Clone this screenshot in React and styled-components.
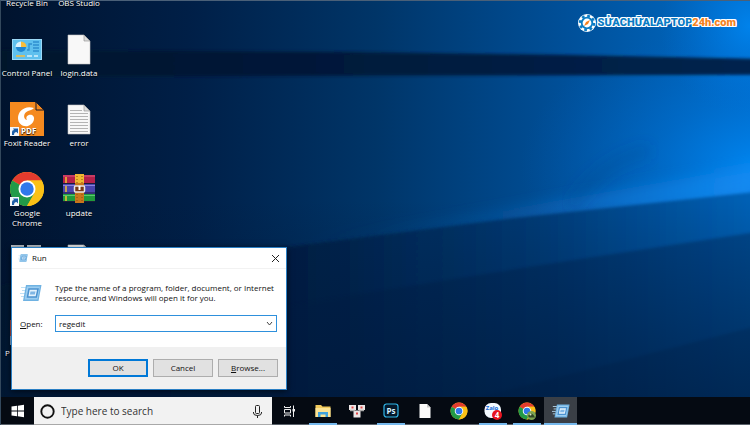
import styled, { createGlobalStyle } from "styled-components";

const GlobalStyle = createGlobalStyle`
  * {
    box-sizing: border-box;
  }
  body {
    margin: 0;
    overflow: hidden;
    font-family: "Open Sans", "Noto Sans", sans-serif;
    font-size: 8px;
    line-height: 10px;
  }
  button,
  input {
    font: inherit;
    margin: 0;
    padding: 0;
    border: none;
    background: none;
  }
`;

const Screen = styled.div`
  height: 100vh;
  display: flex;
  flex-direction: column;
  background-color: #00142f;
  border-top: 1px solid #4a6078;
  border-left: 1px solid #33485c;
`;

const Desktop = styled.main`
  flex: 1;
  min-height: 0;
  position: relative;
  overflow: hidden;
  display: flex;
  justify-content: space-between;
  align-items: flex-start;
`;

const WallpaperSvg = styled.svg`
  position: absolute;
  inset: 0;
  width: 100%;
  height: 100%;
`;

const IconGrid = styled.div`
  position: relative;
  display: grid;
  grid-template-columns: repeat(2, 52px);
  grid-auto-rows: 70px;
  margin-top: -39px;
`;

const Shortcut = styled.button`
  display: flex;
  flex-direction: column;
  align-items: center;
  gap: 2px;
  color: white;
  text-shadow: 0 1px 1px black;
  & svg {
    width: 34px;
    height: 34px;
  }
`;

const IconSpace = styled.span`
  height: 34px;
`;

const Label = styled.span`
  max-width: ${(props) => (props.$narrow ? "40px" : "none")};
  white-space: ${(props) => (props.$narrow ? "normal" : "nowrap")};
  align-self: ${(props) => (props.$start ? "flex-start" : "center")};
  padding: ${(props) => (props.$start ? "0 4px" : "0")};
`;

const Brand = styled.div`
  position: relative;
  display: flex;
  align-items: center;
  gap: 2px;
  padding: 13px 14px;
  & svg {
    width: 18px;
    height: 18px;
  }
`;

const BrandName = styled.span`
  font-family: Roboto, "Open Sans", sans-serif;
  font-size: 11px;
  line-height: 18px;
  font-weight: 900;
  color: #0a7cc4;
  text-shadow: 1px 0 white, -1px 0 white, 0 1px white, 0 -1px white,
    1px 1px white, -1px -1px white, 1px -1px white, -1px 1px white;
  & b {
    font-weight: 900;
    color: #f58220;
  }
`;

const Dialog = styled.form`
  position: absolute;
  left: 10px;
  bottom: 7px;
  width: 276px;
  background-color: white;
  border: 1px solid #2a7fc4;
  box-shadow: 0 1px 6px rgba(0, 0, 0, 0.6);
  color: #111;
`;

const TitleBar = styled.header`
  display: flex;
  align-items: center;
  gap: 4px;
  height: 21px;
  padding: 0 6px;
  border-bottom: 1px solid #f2f2f2;
  & > svg {
    width: 10px;
    height: 10px;
  }
`;

const Title = styled.span`
  flex: 1;
`;

const CloseBtn = styled.button`
  width: 9px;
  height: 9px;
  display: flex;
  & svg {
    width: 9px;
    height: 9px;
  }
`;

const DialogBody = styled.div`
  display: grid;
  grid-template-columns: 35px 1fr;
  align-items: center;
  row-gap: 11px;
  padding: 13px 9px 15px 8px;
  & > svg {
    width: 22px;
    height: 22px;
  }
`;

const OpenLabel = styled.label`
  white-space: nowrap;
`;

const Combo = styled.div`
  display: flex;
  align-items: center;
  height: 17px;
  padding: 0 3px;
  border: 1px solid #2e90dc;
`;

const ComboInput = styled.input`
  flex: 1;
  min-width: 0;
  outline: none;
  color: #111;
`;

const DropBtn = styled.button`
  display: flex;
  & svg {
    width: 7px;
    height: 7px;
  }
`;

const DialogFooter = styled.footer`
  display: flex;
  justify-content: flex-end;
  gap: 5px;
  padding: 12px 8px;
  background-color: #f0f0f0;
`;

const Btn = styled.button`
  width: 60px;
  height: 18px;
  background-color: #e1e1e1;
  border: ${(props) => (props.$main ? "2px solid #0078d7" : "1px solid #adadad")};
  color: #111;
`;

const Taskbar = styled.nav`
  display: flex;
  height: 28px;
  background-color: #050a12;
  box-shadow: inset 0 -1px #59616a;
`;

const TaskBtn = styled.button`
  width: 33px;
  margin-right: 1px;
  display: flex;
  align-items: center;
  justify-content: center;
  background-color: ${(props) => (props.$active ? "#3a3f46" : "transparent")};
  & svg {
    width: 18px;
    height: 18px;
  }
`;

const StartBtn = styled(TaskBtn)`
  margin-right: 0;
`;

const Running = styled(TaskBtn)`
  background-image: linear-gradient(#76b9ed, #76b9ed);
  background-repeat: no-repeat;
  background-position: bottom;
  background-size: ${(props) => (props.$active ? "100% 2px" : "28px 2px")};
`;

const Search = styled.label`
  display: flex;
  align-items: center;
  width: 238px;
  gap: 6px;
  padding: 0 7px 0 6px;
  background-color: #f2f2f2;
  box-shadow: inset 0 -1px #a8a8a8;
  & svg {
    width: 15px;
    height: 15px;
  }
`;

const SearchInput = styled.input`
  flex: 1;
  min-width: 0;
  font-size: 10px;
  line-height: 14px;
  outline: none;
  &::placeholder {
    color: #333;
    opacity: 1;
  }
`;

const Wallpaper = () => (
  <WallpaperSvg viewBox="0 0 750 397" preserveAspectRatio="none" aria-hidden="true">
    <defs>
      <linearGradient id="base" x1="0" x2="1">
        <stop offset="0" stopColor="#00132e" />
        <stop offset="0.25" stopColor="#001f47" />
        <stop offset="0.5" stopColor="#003568" />
        <stop offset="0.75" stopColor="#004f98" />
        <stop offset="1" stopColor="#006cc8" />
      </linearGradient>
      <radialGradient id="glow" gradientUnits="userSpaceOnUse" cx="760" cy="165" r="240" gradientTransform="translate(0 66) scale(1 0.6)">
        <stop offset="0" stopColor="#0088f4" stopOpacity="0.9" />
        <stop offset="0.45" stopColor="#0076de" stopOpacity="0.4" />
        <stop offset="1" stopColor="#0060c0" stopOpacity="0" />
      </radialGradient>
      <radialGradient id="corner" gradientUnits="userSpaceOnUse" cx="750" cy="25" r="90">
        <stop offset="0" stopColor="#0088f4" stopOpacity="0.8" />
        <stop offset="1" stopColor="#0070d8" stopOpacity="0" />
      </radialGradient>
      <linearGradient id="band" x1="0" x2="1">
        <stop offset="0" stopColor="#00122c" />
        <stop offset="0.5" stopColor="#001a3c" />
        <stop offset="1" stopColor="#00234e" />
      </linearGradient>
      <linearGradient id="floor" x1="0" x2="1">
        <stop offset="0" stopColor="#00122c" />
        <stop offset="0.4" stopColor="#001f45" />
        <stop offset="0.7" stopColor="#003a75" />
        <stop offset="1" stopColor="#0062b8" />
      </linearGradient>
      <linearGradient id="shade" x2="0" y2="1">
        <stop offset="0" stopColor="#001838" stopOpacity="0" />
        <stop offset="1" stopColor="#001838" stopOpacity="0.55" />
      </linearGradient>
      <linearGradient id="ray" x1="0" x2="1">
        <stop offset="0" stopColor="#0a5fb4" stopOpacity="0" />
        <stop offset="1" stopColor="#1a90f8" stopOpacity="0.7" />
      </linearGradient>
      <filter id="soft" x="-5%" y="-20%" width="110%" height="140%">
        <feGaussianBlur stdDeviation="1.500" />
      </filter>
      <filter id="mist" x="-10%" y="-30%" width="120%" height="160%">
        <feGaussianBlur stdDeviation="7" />
      </filter>
    </defs>
    <rect width="750" height="397" fill="url(#base)" />
    <rect width="750" height="397" fill="url(#glow)" />
    <rect width="750" height="120" fill="url(#corner)" />
    <path d="M0 49 L330 51 L560 54 L760 58 V74 L330 75 L0 76Z" fill="url(#band)" filter="url(#soft)" />
    <path d="M280 246 L500 210 L760 165 V200 L500 222Z" fill="url(#ray)" filter="url(#mist)" />
    <path d="M570 208 Q600 160 650 150" fill="none" stroke="#003f88" strokeOpacity="0.2" strokeWidth="14" filter="url(#mist)" />
    <path d="M0 285 L290 246 L510 218 L760 191 V400 H0Z" fill="url(#floor)" filter="url(#soft)" />
    <path d="M290 305 L520 268 L760 231 V400 H290Z" fill="#001c44" opacity="0.35" filter="url(#soft)" />
    <path d="M480 397 L760 325 V400Z" fill="#001838" opacity="0.2" filter="url(#soft)" />
    <rect y="200" width="750" height="197" fill="url(#shade)" />
  </WallpaperSvg>
);

const Arrow = () => (
  <g>
    <rect x="0" y="25" width="9" height="9" fill="#f4f7fa" />
    <path d="M2 33 V30 Q2 28 4 28 L3 26.500 H8 V31.500 L6.500 30 Q4 30 4 33Z" fill="#1d5fa8" />
  </g>
);

const ControlPanelIcon = () => (
  <svg viewBox="0 0 34 34">
    <rect x="2.500" y="7.500" width="29" height="20" fill="#5fc0ee" stroke="#9cd9f7" />
    <circle cx="11" cy="15" r="5" fill="#1f86d2" />
    <path d="M11 15 V9.500 A5.500 5.500 0 0 0 5.500 15Z" fill="#d8f1fd" />
    <path d="M11 15 V9.500 A5.500 5.500 0 0 1 16.500 15Z" fill="#f9bd3a" />
    <path d="M17 18 H19 V12 H22 M23 10 H29 M23 13 H29 M23 16 H29 M23 19 H29" fill="none" stroke="#2f8fd0" strokeWidth="1.300" />
    <path d="M6 24 H15" stroke="#f9bd3a" strokeWidth="1.500" />
    <path d="M17 24 H22 M24 24 H28" stroke="#d8f1fd" strokeWidth="1.500" />
  </svg>
);

const FileIcon = ({ lines }) => (
  <svg viewBox="0 0 34 34">
    <path d="M6 3 H22 L28 9 V32 H6Z" fill="#f8f8f8" stroke="#c4c4c4" strokeWidth="0.600" />
    <path d="M22 3 V9 H28Z" fill="#dcdcdc" stroke="#8c8c8c" strokeWidth="0.600" />
    {lines && (
      <path d="M8 8.500 H20 M8 11.500 H26 M8 14.500 H26 M8 17.500 H26 M8 20.500 H26 M8 23.500 H26 M8 26.500 H26 M8 29.500 H26" stroke="#b4b4b4" />
    )}
  </svg>
);

const FoxitIcon = () => (
  <svg viewBox="0 0 34 34">
    <path d="M0 0 H25 L34 8 V34 H0Z" fill="#f58a1f" />
    <path d="M26 0 V8 H34Z" fill="#f58a1f" stroke="#1a1a2a" />
    <path d="M24 6 C15 3 8 9 8 16 C8 22 13 25 18 24 C24 22 26 15 22 13 C18 12 15 15 17 18 C13 17 13 11 18 9 C20 8 22 8 24 6Z" fill="white" />
    <text x="11" y="32" fill="white" fontSize="8" fontWeight="bold">PDF</text>
    <Arrow />
  </svg>
);

const ChromeRing = () => (
  <g>
    <circle cx="17" cy="17" r="17" fill="#fbc116" />
    <path d="M17 17 L2.300 8.500 A17 17 0 0 1 31.700 8.500 H17Z" fill="#e33b2e" />
    <path d="M17 17 L2.300 8.500 A17 17 0 0 0 17 34 L24.400 21.200Z" fill="#229a48" />
    <path d="M17 8.500 H31.700 A17 17 0 0 1 17 34 L24.400 21.200Z" fill="#fbc116" />
    <circle cx="17" cy="17" r="8.500" fill="white" />
    <circle cx="17" cy="17" r="6.700" fill="#2f78ea" />
  </g>
);

const ChromeIcon = () => (
  <svg viewBox="0 0 34 34">
    <ChromeRing />
    <Arrow />
  </svg>
);

const WinrarIcon = () => (
  <svg viewBox="0 0 34 34">
    <rect x="1" y="3" width="32" height="9" fill="#b3204a" />
    <rect x="1" y="12" width="32" height="10" fill="#4a44ae" />
    <rect x="1" y="22" width="32" height="8" fill="#1f9a3c" />
    <path d="M1 4 H33" stroke="#e0587c" />
    <path d="M1 13.500 H33" stroke="#8a84dc" />
    <path d="M1 23.500 H33" stroke="#5cc870" />
    <path d="M1 11.500 H33 M1 21 H33 M1 29.500 H33" stroke="#1c1c3a" />
    <path d="M4 5 V11 M4 14 V20 M4 24 V29" stroke="#f2c230" strokeWidth="1.500" />
    <rect x="13" y="2" width="9" height="29" fill="#c8761c" />
    <rect x="13" y="2" width="9" height="9" fill="#f0b830" />
    <path d="M15 4 V30 M20 4 V30" stroke="#8c4c10" strokeDasharray="1 2" />
    <rect x="12.500" y="14" width="10" height="6" rx="1" fill="#7c3a14" stroke="#e8e8e8" strokeWidth="1.500" />
    <path d="M17.500 14 V18" stroke="white" strokeWidth="2" />
  </svg>
);

const AppTilesIcon = () => (
  <svg viewBox="0 0 34 34">
    <path d="M1 3 H14 V34 H1Z M17 3 H31 V34 H17Z" fill="#b9c0c8" />
  </svg>
);

const PinkIcon = () => (
  <svg viewBox="0 0 34 34">
    <rect x="0" y="8" width="30" height="16" fill="#b0483f" />
    <rect x="0" y="24" width="30" height="9" fill="#88a8cc" />
  </svg>
);

const RunIcon = () => (
  <svg viewBox="0 0 22 22">
    <path d="M1 5.500 H7 M2 8.500 H7 M0 11.500 H6 M1 14.500 H6" stroke="#bfe0f5" />
    <path d="M6 3 H21.500 L18.500 19 H3Z" fill="#6fb2e2" />
    <path d="M7 4.500 H20 L17.500 17.500 H4.700Z" fill="#9ccdf0" />
    <path d="M9 7 H18 L16.300 15 H7.500Z" fill="#e4f2fc" stroke="#4b92cf" strokeWidth="1.500" />
    <path d="M10.500 9.500 H15.500 L14.800 12.500 H9.900Z" fill="#7fb6e4" />
  </svg>
);

const GearIcon = () => (
  <svg viewBox="0 0 18 18">
    <circle cx="9" cy="9" r="9" fill="white" />
    <circle cx="9" cy="9" r="7" fill="none" stroke="#0a7cc4" strokeWidth="2.500" strokeDasharray="2.750 2.750" />
    <circle cx="9" cy="9" r="5.300" fill="white" stroke="#0a7cc4" strokeWidth="1.800" />
    <path d="M12 6 L10 10 L6 12 L8 8Z" fill="#f58220" />
  </svg>
);

const shortcuts = [
  { name: "Recycle Bin" },
  { name: "OBS Studio" },
  { name: "Control Panel", icon: <ControlPanelIcon /> },
  { name: "login.data", icon: <FileIcon /> },
  { name: "Foxit Reader", icon: <FoxitIcon /> },
  { name: "error", icon: <FileIcon lines /> },
  { name: "Google Chrome", icon: <ChromeIcon />, narrow: true },
  { name: "update", icon: <WinrarIcon /> },
  { name: "", icon: <AppTilesIcon /> },
  { name: "", icon: <FileIcon /> },
  { name: "P", icon: <PinkIcon />, start: true },
];

const App = () => {
  return (
    <>
      <GlobalStyle />
      <Screen>
        <Desktop>
          <Wallpaper />
          <IconGrid>
            {shortcuts.map((item, i) => (
              <Shortcut key={i} type="button" aria-label={item.name || "Shortcut"}>
                {item.icon || <IconSpace />}
                <Label $narrow={item.narrow} $start={item.start}>
                  {item.name}
                </Label>
              </Shortcut>
            ))}
          </IconGrid>
          <Brand>
            <GearIcon />
            <BrandName>
              SỬACHỮALAPTOP<b>24h.com</b>
            </BrandName>
          </Brand>
          <Dialog onSubmit={(e) => e.preventDefault()}>
            <TitleBar>
              <RunIcon />
              <Title>Run</Title>
              <CloseBtn type="button" aria-label="Close">
                <svg viewBox="0 0 9 9">
                  <path d="M1 1 L8 8 M8 1 L1 8" stroke="#222" />
                </svg>
              </CloseBtn>
            </TitleBar>
            <DialogBody>
              <RunIcon />
              <span>
                Type the name of a program, folder, document, or Internet resource, and Windows will open it for you.
              </span>
              <OpenLabel htmlFor="open">
                <u>O</u>pen:
              </OpenLabel>
              <Combo>
                <ComboInput id="open" defaultValue="regedit" />
                <DropBtn type="button" aria-label="Show history">
                  <svg viewBox="0 0 7 7">
                    <path d="M1 2 L3.500 5 L6 2" fill="none" stroke="#444" />
                  </svg>
                </DropBtn>
              </Combo>
            </DialogBody>
            <DialogFooter>
              <Btn $main>OK</Btn>
              <Btn type="button">Cancel</Btn>
              <Btn type="button">
                <u>B</u>rowse...
              </Btn>
            </DialogFooter>
          </Dialog>
        </Desktop>
        <Taskbar>
          <StartBtn aria-label="Start">
            <svg viewBox="0 0 18 18">
              <path d="M2.500 4.500 L8 3.800 V8.600 H2.500Z M8.800 3.700 L15 2.800 V8.600 H8.800Z M2.500 9.400 H8 V14.200 L2.500 13.500Z M8.800 9.400 H15 V15.200 L8.800 14.300Z" fill="white" />
            </svg>
          </StartBtn>
          <Search>
            <svg viewBox="0 0 15 15">
              <circle cx="7.500" cy="7.500" r="6.200" fill="none" stroke="#111" strokeWidth="1.900" />
            </svg>
            <SearchInput placeholder="Type here to search" />
            <svg viewBox="0 0 15 15">
              <rect x="5.500" y="1.500" width="4" height="8" rx="1" fill="none" stroke="#222" />
              <path d="M3.500 8 V9 Q3.500 11.500 7.500 11.500 T11.500 9 V8 M7.500 11.500 V14" fill="none" stroke="#222" />
            </svg>
          </Search>
          <TaskBtn aria-label="Task View">
            <svg viewBox="0 0 18 18">
              <path d="M4.500 4 V5.500 H10.500 V4 M4.500 14.500 V13 H10.500 V14.500 M4.500 7.500 H10.500 V11 H4.500Z M13.500 3.500 V15" fill="none" stroke="#eee" />
              <rect x="12.500" y="7" width="2.500" height="2.500" fill="#eee" />
            </svg>
          </TaskBtn>
          <Running aria-label="File Explorer">
            <svg viewBox="0 0 18 18">
              <path d="M1.500 3 H7 L8.500 4.500 H16.500 V15 H1.500Z" fill="#f0c95c" />
              <path d="M1.500 6 H16.500 V15 H1.500Z" fill="#fbe394" />
              <path d="M4 15 V10 H14 V15 H11.500 V12.500 H6.500 V15Z" fill="#3fa2dc" />
            </svg>
          </Running>
          <TaskBtn aria-label="Tiles">
            <svg viewBox="0 0 18 18">
              <path d="M1 3 H8 V8 H1Z M10 3 H17 V8 H10Z M5.500 8.500 H12.500 V15.500 H5.500Z" fill="#ece6e6" />
              <path d="M2 8.500 H7 M11 8.500 H16" stroke="#aaa" strokeWidth="1.500" />
              <path d="M3.500 5.500 H5.500 M12.500 5.500 H14.500 M8 11.500 H10" stroke="#e04848" strokeWidth="2" />
            </svg>
          </TaskBtn>
          <Running aria-label="Photoshop">
            <svg viewBox="0 0 18 18">
              <rect x="2" y="2" width="14" height="13" rx="2.500" fill="#04182a" stroke="#31b6e8" strokeWidth="1.200" />
              <text x="9" y="11.500" fill="#d8f3ff" fontSize="8" fontWeight="bold" textAnchor="middle">Ps</text>
            </svg>
          </Running>
          <TaskBtn aria-label="Document">
            <svg viewBox="0 0 18 18">
              <path d="M3.500 2 H11 L14.500 5.500 V16 H3.500Z" fill="#fafafa" />
              <path d="M11 2 V5.500 H14.500Z" fill="#c8c8c8" />
            </svg>
          </TaskBtn>
          <TaskBtn aria-label="Chrome">
            <svg viewBox="-1 -1 36 36">
              <ChromeRing />
            </svg>
          </TaskBtn>
          <Running aria-label="Zalo">
            <svg viewBox="0 0 18 18">
              <rect x="0.500" y="1" width="16.500" height="15" rx="6.500" fill="#f4f9ff" />
              <text x="8" y="8" fill="#1268d8" fontSize="6" fontWeight="bold" textAnchor="middle">Zalo</text>
              <circle cx="13" cy="13" r="5" fill="#e81420" />
              <text x="13" y="16" fill="white" fontSize="8" fontWeight="bold" textAnchor="middle">4</text>
            </svg>
          </Running>
          <Running aria-label="Chrome profile">
            <svg viewBox="-1 -1 36 36">
              <ChromeRing />
              <circle cx="26" cy="26" r="9" fill="#7ca452" />
              <path d="M19 27 Q24 18 30 25 L33 30 H22Z" fill="#2f4726" />
              <circle cx="24" cy="24" r="2" fill="#dce8c8" />
            </svg>
          </Running>
          <Running $active aria-label="Run">
            <RunIcon />
          </Running>
        </Taskbar>
      </Screen>
    </>
  );
};

export default App;
